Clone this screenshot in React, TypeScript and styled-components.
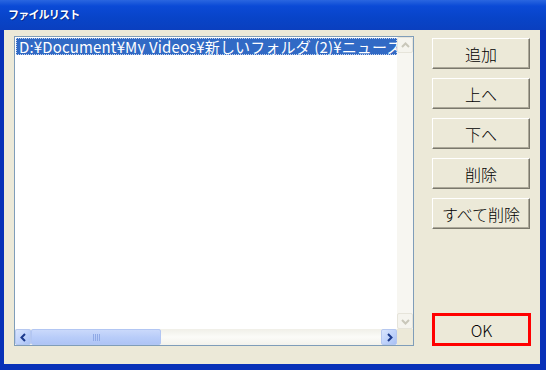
import styled, { createGlobalStyle } from 'styled-components';

const GlobalStyle = createGlobalStyle`
    html, body {
        margin: 0;
        padding: 0;
        background: #0a2f9e;
    }
    * {
        box-sizing: border-box;
    }
`;

const FONT = `"Noto Sans CJK JP", "Noto Sans", sans-serif`;

const buttons = ['追加', '上へ', '下へ', '削除', 'すべて削除'];

const App: React.FC = () => {
    return (
        <>
            <GlobalStyle />
            <Window>
                <TitleBar>
                    <Title>ファイルリスト</Title>
                </TitleBar>

                <Client>
                    <ListBox>
                        <ListArea>
                            <ListItem selected>
                                D:¥Document¥My Videos¥新しいフォルダ (2)¥ニュース.avi
                            </ListItem>
                        </ListArea>

                        <VScroll>
                            <ArrowButton disabled>
                                <Chevron dir="up" disabled />
                            </ArrowButton>
                            <ScrollTrack />
                            <ArrowButton disabled>
                                <Chevron dir="down" disabled />
                            </ArrowButton>
                        </VScroll>

                        <HScroll>
                            <ArrowButton>
                                <Chevron dir="left" />
                            </ArrowButton>
                            <Thumb>
                                <Grip>
                                    <span /><span /><span /><span />
                                </Grip>
                            </Thumb>
                            <ScrollTrack />
                            <ArrowButton>
                                <Chevron dir="right" />
                            </ArrowButton>
                        </HScroll>

                        <Corner />
                    </ListBox>

                    <ButtonColumn>
                        {buttons.map(label => (
                            <Button key={label}>{label}</Button>
                        ))}
                        <Spacer />
                        <Button focused>OK</Button>
                    </ButtonColumn>
                </Client>
            </Window>
        </>
    );
};

const Chevron: React.FC<{ dir: 'up' | 'down' | 'left' | 'right'; disabled?: boolean }> = ({ dir, disabled }) => {
    const points = {
        up: '3,8 6.5,4.5 10,8',
        down: '3,5 6.5,8.5 10,5',
        left: '8,3 4.5,6.5 8,10',
        right: '5,3 8.5,6.5 5,10',
    }[dir];
    return (
        <svg width="13" height="13" viewBox="0 0 13 13">
            <polyline
                points={points}
                fill="none"
                stroke={disabled ? '#c9c7ba' : '#1c3a8c'}
                strokeWidth="2"
            />
        </svg>
    );
};

const Window = styled.div`
    width: 546px;
    height: 370px;
    display: flex;
    flex-direction: column;
    background: #0831b8;
    overflow: hidden;
`;

const TitleBar = styled.div`
    height: 30px;
    flex: none;
    display: flex;
    align-items: center;
    padding-left: 8px;
    background: linear-gradient(180deg, #2a66e0 0%, #0b4ad6 20%, #0844c8 60%, #0a3fbf 100%);
`;

const Title = styled.span`
    font-family: ${FONT};
    font-weight: bold;
    font-size: 11px;
    letter-spacing: -0.8px;
    color: #ffffff;
    text-shadow: 1px 1px 0 #0a2a8a;
    margin-top: -2px;
`;

const Client = styled.div`
    flex: 1;
    display: flex;
    margin: 0 6px 6px 4px;
    padding: 6px 0 0 10px;
    gap: 18px;
    background: #ece9d8;
`;

const ListBox = styled.div`
    width: 400px;
    height: 310px;
    display: grid;
    grid-template-columns: 1fr 16px;
    grid-template-rows: 1fr 16px;
    border: 1px solid #7f9db9;
    background: #ffffff;
`;

const ListArea = styled.div`
    overflow: hidden;
    padding: 1px 0 0 1px;
`;

const ListItem = styled.div<{ selected?: boolean }>`
    height: 17px;
    line-height: 17px;
    padding-left: 3px;
    white-space: nowrap;
    font-family: ${FONT};
    font-size: 15px;
    letter-spacing: 0.15px;
    color: ${props => props.selected ? '#ffffff' : '#000000'};
    background: ${props => props.selected ? '#316ac5' : 'transparent'};
    outline: ${props => props.selected ? '1px dotted #c5d3ee' : 'none'};
    outline-offset: -1px;
`;

const VScroll = styled.div`
    display: flex;
    flex-direction: column;
    background: #f7f6f1;
`;

const HScroll = styled.div`
    display: flex;
    background: linear-gradient(180deg, #f0efe8 0%, #fbfbf8 50%, #f3f2ec 100%);
`;

const ScrollTrack = styled.div`
    flex: 1;
`;

const ArrowButton = styled.div<{ disabled?: boolean }>`
    width: 16px;
    height: 16px;
    flex: none;
    display: flex;
    align-items: center;
    justify-content: center;
    border: 1px solid ${props => props.disabled ? '#e6e4da' : '#b6c8f0'};
    border-radius: 2px;
    background: ${props => props.disabled
        ? '#f5f4ee'
        : 'linear-gradient(135deg, #d9e5fd 0%, #bcd0fa 60%, #a8c0f4 100%)'};
`;

const Thumb = styled.div`
    width: 130px;
    flex: none;
    display: flex;
    align-items: center;
    justify-content: center;
    border: 1px solid #b2c6f3;
    border-radius: 2px;
    background: linear-gradient(180deg, #cad9fb 0%, #b9cdf9 50%, #aec4f5 100%);
`;

const Grip = styled.div`
    display: flex;
    gap: 1px;

    span {
        width: 1px;
        height: 7px;
        background: #eef3fe;
        border-right: 1px solid #8fa9e6;
    }
`;

const Corner = styled.div`
    background: #ece9d8;
`;

const ButtonColumn = styled.div`
    width: 99px;
    height: 310px;
    display: flex;
    flex-direction: column;
    gap: 9px;
    padding-top: 2px;
`;

const Spacer = styled.div`
    flex: 1;
`;

const Button = styled.div<{ focused?: boolean }>`
    height: ${props => props.focused ? '33px' : '31px'};
    width: ${props => props.focused ? '99px' : '98px'};
    flex: none;
    display: flex;
    align-items: center;
    justify-content: center;
    font-family: ${FONT};
    font-size: 16px;
    font-weight: 300;
    color: #000000;
    background: #ece9d8;
    border: ${props => props.focused ? '3px solid #ff0000' : '1px solid'};
    border-color: ${props => props.focused ? '#ff0000' : '#ffffff #7a786c #7a786c #ffffff'};
    box-shadow: ${props => props.focused ? 'none' : 'inset -1px -1px 0 #aca899'};
`;

export default App;
